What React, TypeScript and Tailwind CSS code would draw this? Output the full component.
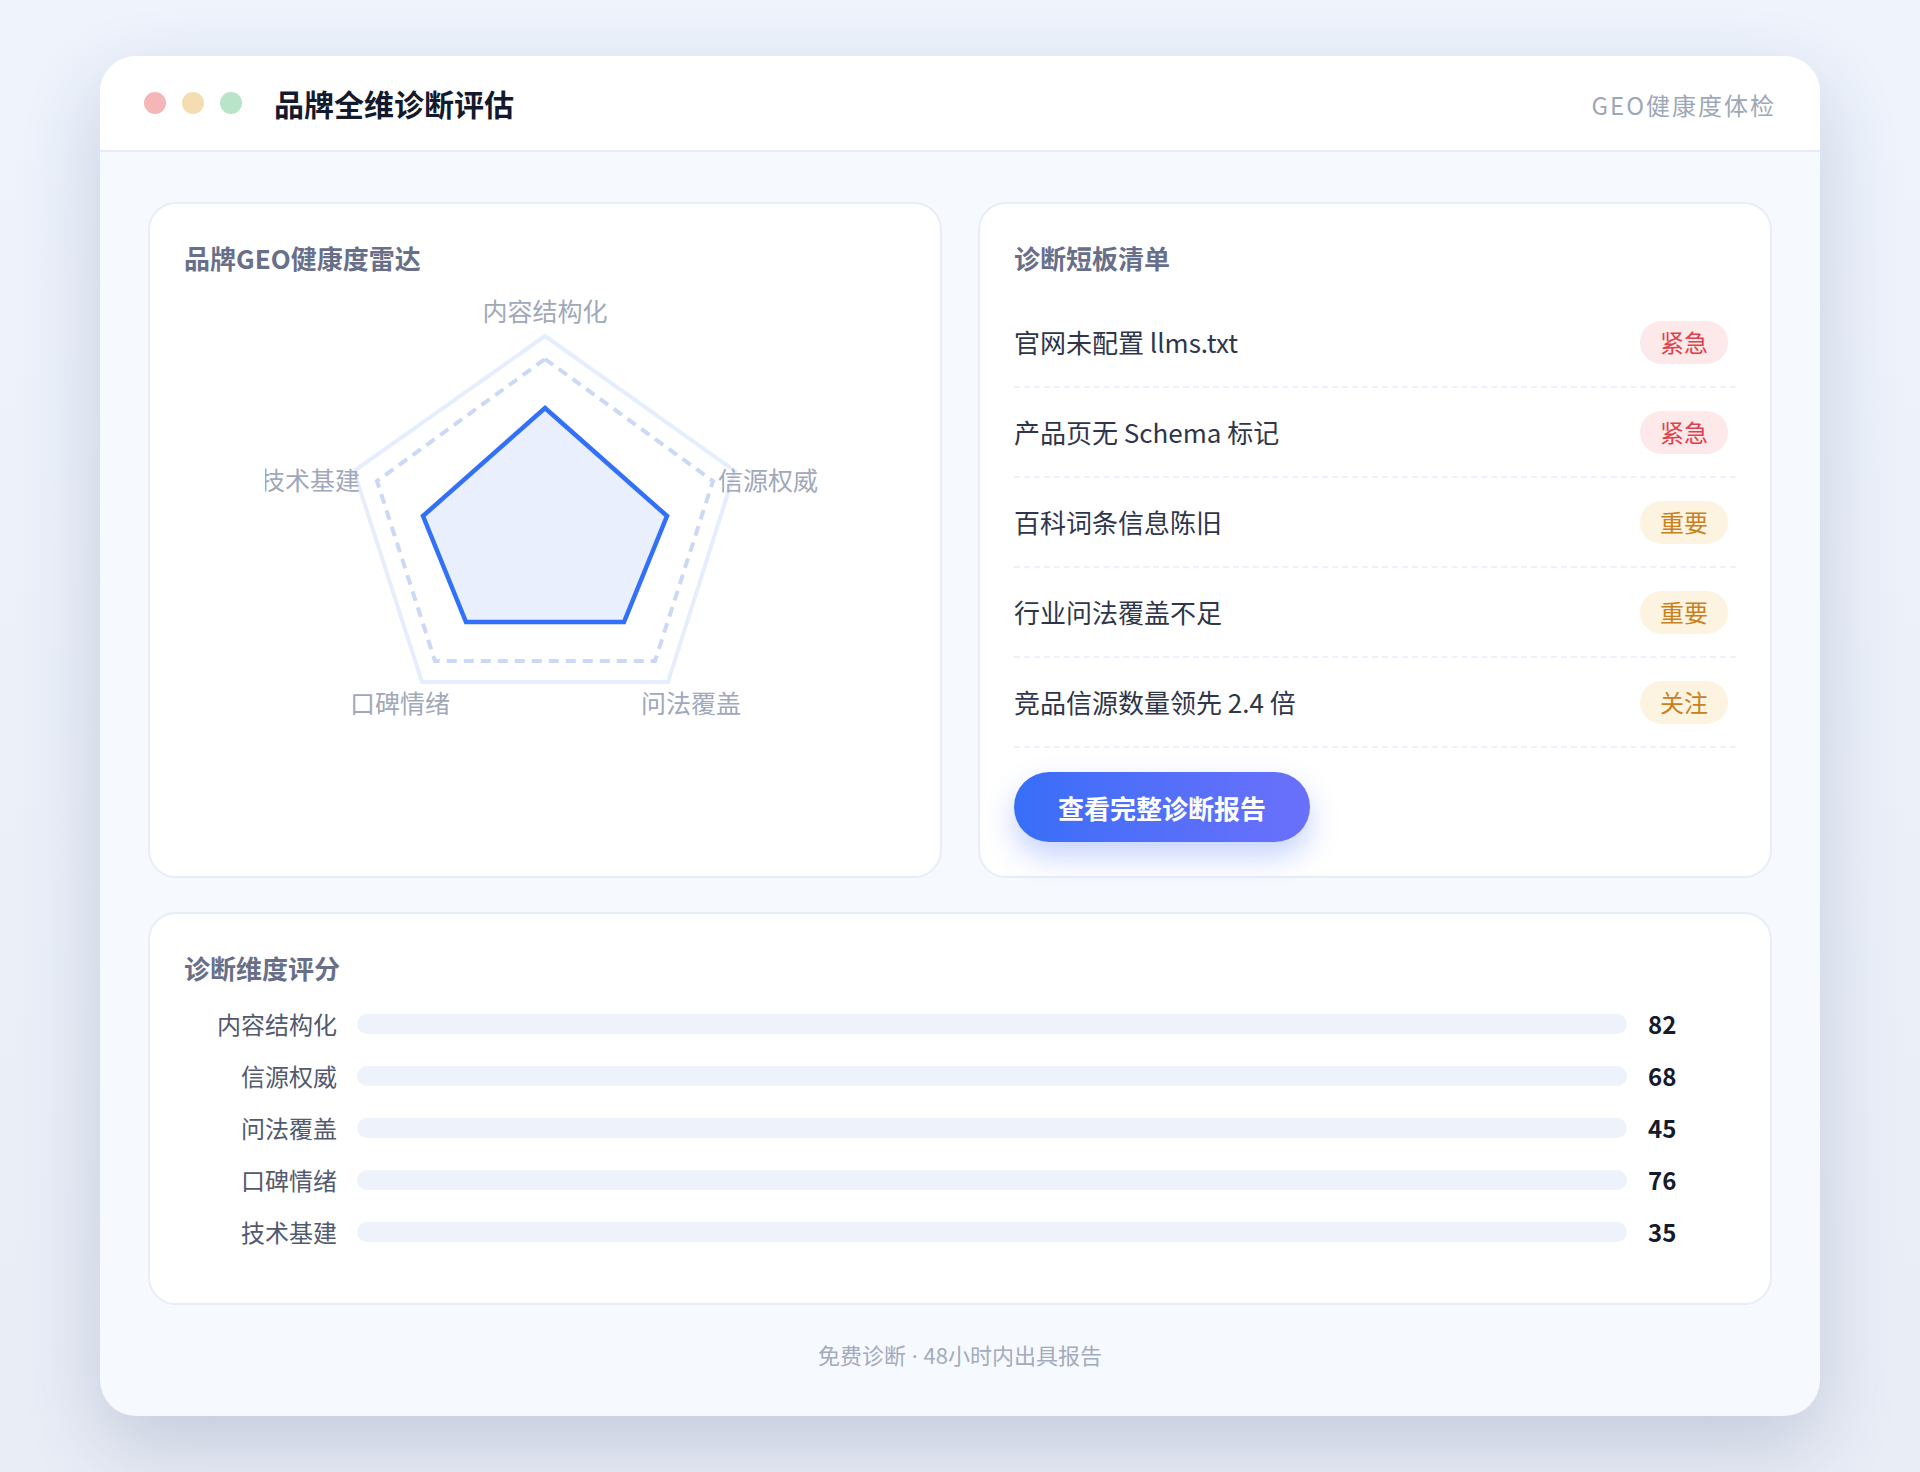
import React from 'react';

const FONT = { fontFamily: '"Noto Sans CJK SC", "Noto Sans", sans-serif' };

const issues = [
  { text: '官网未配置 llms.txt', level: '紧急' },
  { text: '产品页无 Schema 标记', level: '紧急' },
  { text: '百科词条信息陈旧', level: '重要' },
  { text: '行业问法覆盖不足', level: '重要' },
  { text: '竞品信源数量领先 2.4 倍', level: '关注' },
];

const scores = [
  { label: '内容结构化', value: 82 },
  { label: '信源权威', value: 68 },
  { label: '问法覆盖', value: 45 },
  { label: '口碑情绪', value: 76 },
  { label: '技术基建', value: 35 },
];

function levelBadge(level: string) {
  if (level === '紧急') return 'bg-[#fde8ea] text-[#e0404c]';
  return 'bg-[#fdf3e1] text-[#c8811e]';
}

function Radar() {
  // drawn in page pixels; the svg clips the left label like the original
  return (
    <svg
      className="mx-auto mt-[2px] block"
      width={560}
      height={460}
      viewBox="266 280 560 460"
    >
      <polygon
        points="546,337 736,472 669,683 423,683 355,472"
        fill="none"
        stroke="#e6eefd"
        strokeWidth={4}
      />
      <polygon
        points="546,360 714,482 656,662 436,662 378,482"
        fill="none"
        stroke="#cbd9f6"
        strokeWidth={4}
        strokeDasharray="10 7"
      />
      <polygon
        points="546,409 668,517 625,623 467,623 424,517"
        fill="#e9effd"
        stroke="#3370fa"
        strokeWidth={4.5}
      />
      <g fill="#a0a8ba" fontSize={25}>
        <text x={546} y={322} textAnchor="middle">内容结构化</text>
        <text x={719} y={491} textAnchor="start">信源权威</text>
        <text x={361} y={491} textAnchor="end">技术基建</text>
        <text x={401} y={714} textAnchor="middle">口碑情绪</text>
        <text x={692} y={714} textAnchor="middle">问法覆盖</text>
      </g>
    </svg>
  );
}

export default function App() {
  return (
    <div
      className="min-h-[1472px] bg-gradient-to-b from-[#eef3fc] to-[#e9edf6] px-[100px] pt-[56px]"
      style={FONT}
    >
      <div className="overflow-hidden rounded-[36px] bg-[#f6f9fe] shadow-[0_30px_80px_rgba(45,65,115,0.2)]">
        {/* Header */}
        <header className="flex h-[96px] items-center justify-between border-b-2 border-[#e6edf9] bg-white px-[44px]">
          <div className="flex items-center">
            <div className="flex items-center gap-4">
              <span className="h-[22px] w-[22px] rounded-full bg-[#f4b6b6]" />
              <span className="h-[22px] w-[22px] rounded-full bg-[#f4ddb0]" />
              <span className="h-[22px] w-[22px] rounded-full bg-[#b9e4c9]" />
            </div>
            <h1 className="ml-[32px] text-[30px] font-bold leading-none text-[#141a2e]">品牌全维诊断评估</h1>
          </div>
          <span className="mt-[3px] text-[24px] leading-none tracking-[2px] text-[#9ea7b8]">GEO健康度体检</span>
        </header>

        <main className="px-[48px] pb-[44px] pt-[50px]">
          <div className="grid grid-cols-2 gap-x-[36px]">
            {/* Radar card */}
            <section className="rounded-[28px] border-2 border-[#e7edf9] bg-white px-[34px] pt-[34px]">
              <h2 className="text-[26px] font-bold leading-[39px] text-[#687089]">品牌GEO健康度雷达</h2>
              <Radar />
            </section>

            {/* Issue list card */}
            <section className="rounded-[28px] border-2 border-[#e7edf9] bg-white px-[34px] pb-[34px] pt-[34px]">
              <h2 className="mb-[21px] text-[26px] font-bold leading-[39px] text-[#687089]">诊断短板清单</h2>
              <ul>
                {issues.map((item) => (
                  <li
                    key={item.text}
                    className="flex h-[90px] items-center justify-between border-b-2 border-dashed border-[#edf1fb] pr-[8px]"
                  >
                    <span className="text-[26px] leading-none text-[#2f364a]">{item.text}</span>
                    <span className={`flex h-[43px] items-center rounded-full px-5 text-[24px] leading-none ${levelBadge(item.level)}`}>
                      {item.level}
                    </span>
                  </li>
                ))}
              </ul>
              <button className="mt-[24px] flex h-[70px] w-[296px] items-center justify-center rounded-full bg-gradient-to-r from-[#376ef8] to-[#6a70fb] text-[26px] font-bold text-white shadow-[0_14px_30px_rgba(64,110,250,0.3)]">
                查看完整诊断报告
              </button>
            </section>
          </div>

          {/* Score card */}
          <section className="mt-[34px] rounded-[28px] border-2 border-[#e7edf9] bg-white px-[34px] pb-[53px] pt-[34px]">
            <h2 className="mb-[19px] text-[26px] font-bold leading-[39px] text-[#687089]">诊断维度评分</h2>
            <div className="grid grid-cols-[153px_1fr_89px] items-center gap-x-5 gap-y-4">
              {scores.map((s) => (
                <React.Fragment key={s.label}>
                  <span className="flex h-[36px] items-center justify-end text-[24px] leading-none text-[#525a70]">{s.label}</span>
                  <div className="h-[20px] rounded-full bg-[#eef2fb]" />
                  <span className="pl-[1px] text-[24px] font-bold leading-none text-[#141b2d]">{s.value}</span>
                </React.Fragment>
              ))}
            </div>
          </section>

          <p className="mt-[33px] text-center text-[22px] leading-[33px] text-[#a3abbc]">
            免费诊断<span style={{ fontFamily: '"Noto Sans", sans-serif' }}> · </span>48小时内出具报告
          </p>
        </main>
      </div>
    </div>
  );
}
